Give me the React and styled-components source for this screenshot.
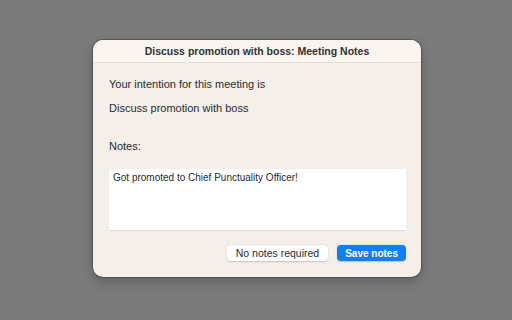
import React from "react";
import styled, { createGlobalStyle } from "styled-components";

const Global = createGlobalStyle`
  html, body {
    margin: 0;
    padding: 0;
    background: #7b7b7b;
    font-family: "Liberation Sans", Arial, sans-serif;
  }
`;

const Screen = styled.div`
  width: 512px;
  height: 320px;
  padding: 40px 0 0 93px;
  box-sizing: border-box;
  background: #7b7b7b;
`;

const Window = styled.div`
  width: 328px;
  height: 237px;
  box-sizing: border-box;
  background: #f4efe9;
  border-radius: 10px;
  overflow: hidden;
  box-shadow: 0 0 0 1px rgba(40, 40, 40, 0.35), 0 4px 12px rgba(0, 0, 0, 0.25);
  display: flex;
  flex-direction: column;
`;

const TitleBar = styled.div`
  height: 22px;
  flex: none;
  display: flex;
  align-items: center;
  justify-content: center;
  background: #faf5ef;
  border-bottom: 1px solid #e4dfd8;
  font-size: 10.5px;
  font-weight: bold;
  color: #333;
`;

const Body = styled.div`
  flex: 1;
  display: flex;
  flex-direction: column;
  padding: 14px 15px 0 16px;
`;

const Line = styled.div`
  font-size: 11px;
  color: #2b2b2b;
  line-height: 14px;
  margin-bottom: ${(p) => p.gap || 0}px;
`;

const NotesBox = styled.div`
  height: 61px;
  margin-top: 16px;
  background: #ffffff;
  box-shadow: 0 1px 1px rgba(0, 0, 0, 0.08);
  padding: 3px 4px;
  box-sizing: border-box;
  font-size: 10px;
  color: #2b2b2b;
`;

const Actions = styled.div`
  display: flex;
  justify-content: flex-end;
  gap: 9px;
  margin-top: 15px;
`;

const Button = styled.div`
  height: 16px;
  padding: 0 ${(p) => (p.primary ? 8 : 9)}px;
  border-radius: 4px;
  display: flex;
  align-items: center;
  font-size: ${(p) => (p.primary ? 10 : 10.5)}px;
  background: ${(p) => (p.primary ? "#0f7ef8" : "#ffffff")};
  color: ${(p) => (p.primary ? "#ffffff" : "#2b2b2b")};
  font-weight: ${(p) => (p.primary ? "bold" : "normal")};
  box-shadow: 0 0.5px 1.5px rgba(0, 0, 0, 0.2);
`;

export default function App() {
  return (
    <Screen>
      <Global />
      <Window>
        <TitleBar>Discuss promotion with boss: Meeting Notes</TitleBar>
        <Body>
          <Line gap={10}>Your intention for this meeting is</Line>
          <Line gap={24}>Discuss promotion with boss</Line>
          <Line>Notes:</Line>
          <NotesBox>Got promoted to Chief Punctuality Officer!</NotesBox>
          <Actions>
            <Button>No notes required</Button>
            <Button primary>Save notes</Button>
          </Actions>
        </Body>
      </Window>
    </Screen>
  );
}
